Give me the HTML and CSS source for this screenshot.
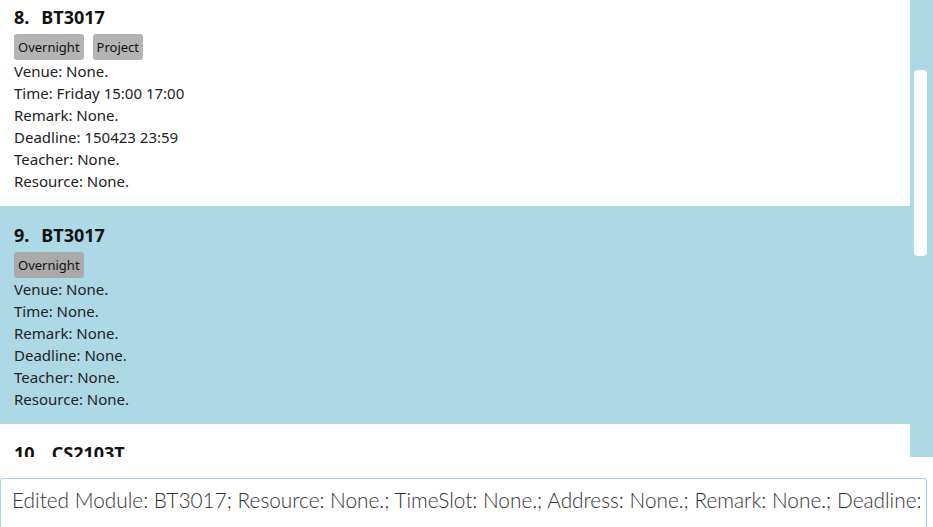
FILE: index.html
```html
<!DOCTYPE html>
<html>
<head>
<meta charset="utf-8">
<link rel="stylesheet" href="styles.css">
</head>
<body>
<div class="list">
  <div class="cards">
    <div class="card">
      <div class="title"><span class="idx">8.</span><span>BT3017</span></div>
      <div class="tags"><span class="tag">Overnight</span><span class="tag">Project</span></div>
      <div class="line">Venue: None.</div>
      <div class="line">Time: Friday 15:00 17:00</div>
      <div class="line">Remark: None.</div>
      <div class="line">Deadline: 150423 23:59</div>
      <div class="line">Teacher: None.</div>
      <div class="line">Resource: None.</div>
    </div>
    <div class="card selected">
      <div class="title"><span class="idx">9.</span><span>BT3017</span></div>
      <div class="tags"><span class="tag">Overnight</span></div>
      <div class="line">Venue: None.</div>
      <div class="line">Time: None.</div>
      <div class="line">Remark: None.</div>
      <div class="line">Deadline: None.</div>
      <div class="line">Teacher: None.</div>
      <div class="line">Resource: None.</div>
    </div>
    <div class="card">
      <div class="title"><span class="idx">10.</span><span>CS2103T</span></div>
    </div>
  </div>
  <div class="scrollbar"><div class="thumb"></div></div>
</div>
<div class="result">
  <div class="result-box">Edited Module: BT3017; Resource: None.; TimeSlot: None.; Address: None.; Remark: None.; Deadline:</div>
</div>
</body>
</html>
```
FILE: styles.css
```css
html, body {
  margin: 0;
  padding: 0;
  background: #ffffff;
  overflow: hidden;
}
body {
  width: 933px;
  height: 527px;
  display: flex;
  flex-direction: column;
  font-family: "Noto Sans", "Open Sans", sans-serif;
  color: #222222;
}
.list {
  height: 457px;
  display: flex;
  overflow: hidden;
  flex-shrink: 0;
}
.cards {
  flex: 1;
  overflow: hidden;
  display: flex;
  flex-direction: column;
}
.cards > .card:first-child {
  margin-top: -12px;
}
.card {
  flex-shrink: 0;
  height: 218px;
  box-sizing: border-box;
  padding: 18px 14px 14px;
  background: #ffffff;
}
.card.selected {
  background: #add8e6;
}
.title {
  display: flex;
  gap: 12px;
  font-size: 18px;
  font-weight: 700;
  line-height: 22px;
  height: 22px;
  color: #111111;
}
.tags {
  display: flex;
  gap: 9px;
  margin-top: 6px;
  height: 26px;
}
.tag {
  background: #b4b4b4;
  border-radius: 3px;
  padding: 0 4px;
  font-size: 13px;
  line-height: 26px;
  height: 26px;
  color: #111111;
}
.selected .tag {
  background: #aaaaaa;
}
.line {
  font-size: 15px;
  line-height: 22px;
  height: 22px;
}
.scrollbar {
  width: 23px;
  background: #add8e6;
  flex-shrink: 0;
  box-sizing: border-box;
  padding: 70px 6px 0 4px;
}
.thumb {
  height: 186px;
  background: #ffffff;
  border-radius: 4px;
}
.result {
  padding-top: 21px;
  height: 70px;
  box-sizing: border-box;
  overflow: hidden;
  flex-shrink: 0;
}
.result-box {
  width: 927px;
  height: 60px;
  box-sizing: border-box;
  border: 1px solid #a4d4e8;
  border-radius: 3px;
  padding: 7px 11px;
  font-family: "Lato", sans-serif;
  font-weight: 300;
  font-size: 20.8px;
  line-height: 28px;
  color: #333333;
  white-space: nowrap;
  overflow: hidden;
}
```
